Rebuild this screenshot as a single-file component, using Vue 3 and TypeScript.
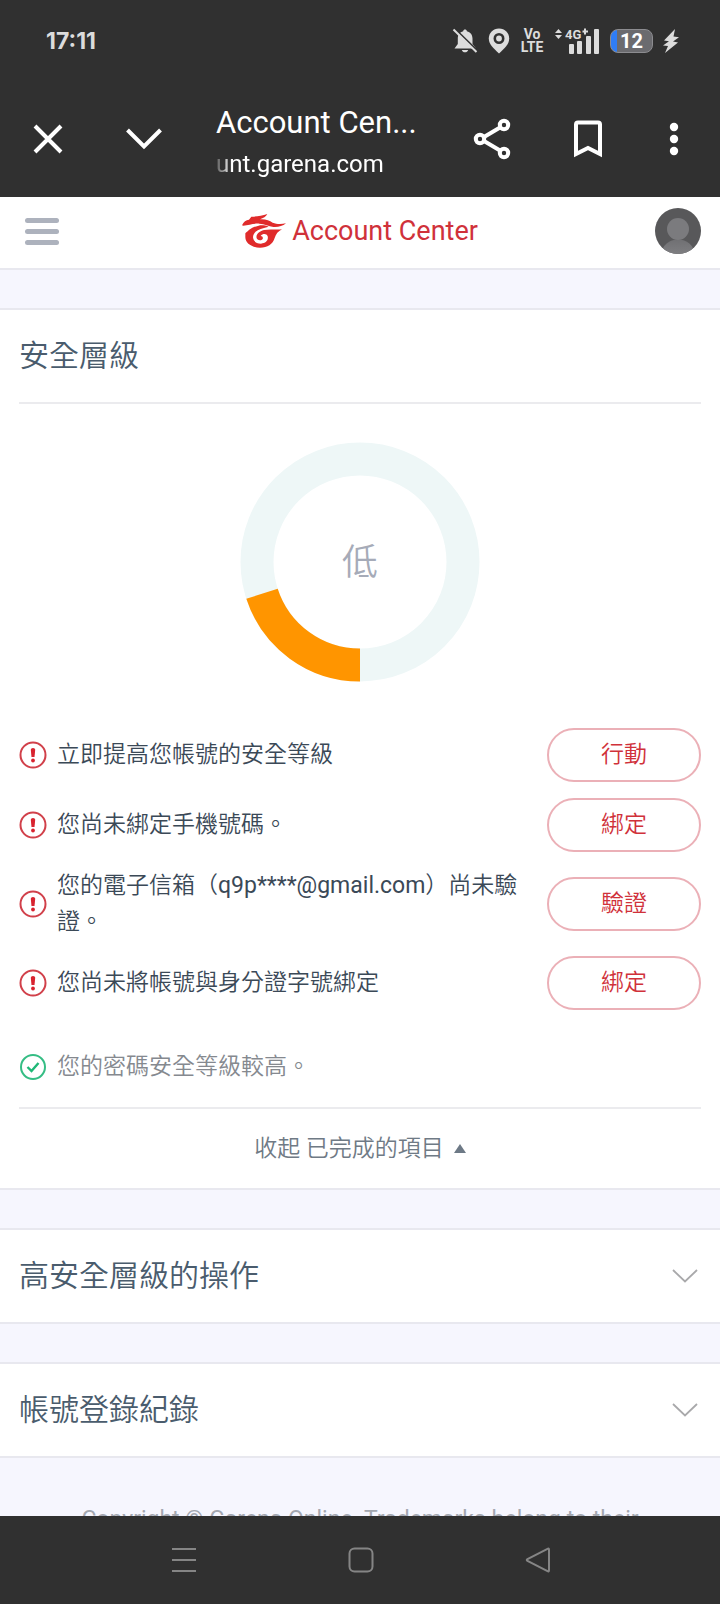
<script setup lang="ts">
import { ref } from 'vue'

interface Task {
  text: string
  email?: string
  rest?: string
  action: string
}

const tasks: Task[] = [
  { text: '立即提高您帳號的安全等級', action: '行動' },
  { text: '您尚未綁定手機號碼。', action: '綁定' },
  { text: '您的電子信箱（', email: 'q9p****@gmail.com', rest: '）尚未驗證。', action: '驗證' },
  { text: '您尚未將帳號與身分證字號綁定', action: '綁定' },
]

const panels: string[] = ['高安全層級的操作', '帳號登錄紀錄']
const level = 20
const expanded = ref(true)
</script>

<template>
  <div class="screen" lang="zh-TW">
    <div class="status">
      <span class="clock">17:11</span>
      <div class="indicators">
        <svg width="26" height="26" viewBox="0 0 26 26" fill="#dcdcdc" aria-hidden="true">
          <path d="M13 1.500c1 0 1.800.7 1.900 1.700 3.500.8 5.600 3.700 5.600 7.300v5.500l3.500 4.500H2.500L5.800 16v-5.500c0-3.600 2-6.500 5.400-7.300.1-1 .8-1.700 1.800-1.700zM9.800 22h6.400c-.5 1.500-1.700 2.300-3.200 2.300S10.300 23.500 9.800 22z" />
          <path d="M2.500 .5 25.500 23" stroke="#303030" stroke-width="2" />
          <path d="M1.500 1.500 24.500 24" stroke="#dcdcdc" stroke-width="2" />
        </svg>
        <svg width="22" height="26" viewBox="0 0 22 26" aria-hidden="true">
          <path d="M11 .5C5 .5.8 5 .8 10.500.8 16 5 20 11 25.500 17 20 21.200 16 21.200 10.500 21.200 5 17 .5 11 .5z" fill="#dcdcdc" />
          <circle cx="11" cy="10.500" r="4.200" fill="#dcdcdc" stroke="#303030" stroke-width="2.600" />
        </svg>
        <span class="volte"><span>Vo</span><span>LTE</span></span>
        <svg class="signal" width="46" height="28" viewBox="0 0 46 28" fill="#dcdcdc" aria-label="4G+">
          <path d="M1 6 4.500 2 8 6zM1 8h7l-3.500 4z" />
          <text x="11" y="12" font-size="13" font-weight="700">4G</text>
          <path d="M28.500 3.500h1.500v-2h2v2h2v2h-2v2h-2v-2h-1.500z" />
          <rect x="15" y="17" width="5" height="10" rx="1" />
          <rect x="23" y="14" width="5" height="13" rx="1" />
          <rect x="32" y="9" width="5" height="18" rx="1" />
          <rect x="40" y="2" width="5" height="25" rx="1" />
        </svg>
        <span class="battery">12</span>
        <svg width="16" height="26" viewBox="0 0 16 26" fill="#dcdcdc" aria-hidden="true">
          <path d="M12 1 1 12.500 6 13.200 0 17.500 5 18 2 25 15 14.500 10 13.500 16 9.200 10.500 8.500z" />
        </svg>
      </div>
    </div>

    <div class="toolbar">
      <button class="tool" aria-label="關閉">
        <svg width="48" height="48" viewBox="0 0 48 48"><path d="m11 11 26 26M37 11 11 37" /></svg>
      </button>
      <button class="tool" aria-label="收合">
        <svg width="48" height="48" viewBox="0 0 48 48"><path d="m7.500 15 16.500 16.500L40.500 15" /></svg>
      </button>
      <div class="address">
        <div class="page-title">Account Cen...</div>
        <div class="host">unt.garena.com</div>
      </div>
      <button class="tool" aria-label="分享">
        <svg width="48" height="48" viewBox="0 0 48 48">
          <path d="m16 22 16-9.500M16 26l16 9.500" />
          <circle cx="12" cy="24" r="4.200" /><circle cx="36" cy="10" r="4.200" /><circle cx="36" cy="38" r="4.200" />
        </svg>
      </button>
      <button class="tool" aria-label="書籤">
        <svg width="48" height="48" viewBox="0 0 48 48"><path d="M12 39V9.500q0-2 2-2h20q2 0 2 2V39l-12-6z" /></svg>
      </button>
      <button class="tool narrow" aria-label="更多">
        <svg width="28" height="48" viewBox="0 0 28 48">
          <g fill="#fff" stroke="none"><circle cx="14" cy="12" r="4.200" /><circle cx="14" cy="24" r="4.200" /><circle cx="14" cy="36" r="4.200" /></g>
        </svg>
      </button>
    </div>

    <div class="page">
      <header class="site-header">
        <button class="menu" aria-label="選單"><i></i><i></i><i></i></button>
        <a class="brand" href="#">
          <svg width="44" height="34" viewBox="0 0 132 102" fill="#e02b2b" aria-hidden="true">
            <path d="M0 34C5 23 12 18 21 17L28 8C44 8 60 6 76 0 72 8 64 12 54 16 72 15 82 20 92 26 105 31 119 30 132 28 122 37 108 40 94 39 80 37 68 30 52 29 36 28 20 33 4 35z" />
            <path d="M50 35C58 33 70 34 80 38L66 42C46 46 33 56 33 70 34 82 44 89 57 89 72 88 80 78 77 67 74 58 62 58 56 66 61 66 64 70 62 75 58 81 47 80 44 73 41 62 50 52 66 48 84 44 104 48 120 46 108 52 102 60 98 72 92 91 77 101 54 101 30 101 10 88 10 70L10 58C20 50 26 40 50 35z" />
          </svg>
          <span>Account Center</span>
        </a>
        <button class="avatar" aria-label="帳號">
          <svg width="46" height="46" viewBox="0 0 46 46">
            <defs>
              <clipPath id="avatar-clip"><circle cx="23" cy="23" r="23" /></clipPath>
              <linearGradient id="avatar-body" x1="0" y1="0" x2="0" y2="1">
                <stop offset="0" stop-color="#707073" /><stop offset="1" stop-color="#8a8a8d" />
              </linearGradient>
            </defs>
            <g clip-path="url(#avatar-clip)">
              <rect width="46" height="46" fill="#58585a" />
              <ellipse cx="23" cy="45" rx="16" ry="13.500" fill="url(#avatar-body)" />
              <circle cx="23" cy="21" r="11" fill="#7b7b7e" />
            </g>
          </svg>
        </button>
      </header>

      <section class="card">
        <h2 class="card-title">安全層級</h2>
        <div class="gauge">
          <svg width="240" height="240" viewBox="0 0 240 240" aria-hidden="true">
            <circle cx="120" cy="120" r="103" fill="none" stroke="#eef7f7" stroke-width="33" />
            <circle
              cx="120" cy="120" r="103" fill="none" stroke="#ff9500" stroke-width="33"
              pathLength="100" :stroke-dasharray="`${level} ${100 - level}`" transform="rotate(90 120 120)"
            />
          </svg>
          <span class="gauge-label">低</span>
        </div>

        <ul class="tasks">
          <li v-for="task in tasks" :key="task.text" class="row">
            <svg class="mark" width="28" height="28" viewBox="0 0 28 28" aria-hidden="true">
              <circle cx="14" cy="14" r="12.500" fill="none" stroke="#d1404a" stroke-width="2" />
              <path d="M11.800 8.800q0-1.800 2.200-1.800t2.200 1.800l-.7 7.200h-3z" fill="#d8232f" />
              <circle cx="14" cy="19.500" r="1.900" fill="#d8232f" />
            </svg>
            <span class="row-text">{{ task.text }}<span v-if="task.email" class="email">{{ task.email }}</span>{{ task.rest }}</span>
            <button class="pill">{{ task.action }}</button>
          </li>
        </ul>

        <div v-if="expanded" class="row done">
          <svg class="mark" width="28" height="28" viewBox="0 0 28 28" aria-hidden="true">
            <circle cx="14" cy="14" r="12" fill="none" stroke="#35bd84" stroke-width="2" />
            <path d="m8.500 14 4 4 7-8" fill="none" stroke="#1fb877" stroke-width="2.400" />
          </svg>
          <span class="row-text">您的密碼安全等級較高。</span>
        </div>

        <button class="toggle" @click="expanded = !expanded">
          <span>收起 已完成的項目</span>
          <svg width="12" height="9" viewBox="0 0 12 9" aria-hidden="true"><path d="M6 0 12 9H0z" fill="#6d7986" /></svg>
        </button>
      </section>

      <section v-for="panel in panels" :key="panel" class="card">
        <button class="panel">
          <span>{{ panel }}</span>
          <svg width="26" height="14" viewBox="0 0 26 14" aria-hidden="true">
            <path d="m1 1 12 11.500L25 1" fill="none" stroke="#a9a9ab" stroke-width="1.800" />
          </svg>
        </button>
      </section>

      <footer class="legal">Copyright © Garena Online. Trademarks belong to their</footer>
    </div>

    <nav class="system-nav">
      <button aria-label="最近"><svg width="28" height="28" viewBox="0 0 28 28"><path d="M2 3h24M2 14h24M2 25h24" /></svg></button>
      <button aria-label="主畫面"><svg width="28" height="28" viewBox="0 0 28 28"><rect x="2.500" y="2.500" width="23" height="23" rx="5" /></svg></button>
      <button aria-label="返回"><svg width="28" height="28" viewBox="0 0 28 28"><path d="M23.500 2.800q1.500-.8 1.500 1v20.400q0 1.800-1.500 1L3.500 15q-1.500-1 0-2z" /></svg></button>
    </nav>
  </div>
</template>

<style>
body {
  margin: 0;
}
</style>

<style scoped>
* {
  box-sizing: border-box;
}

.screen {
  display: flex;
  flex-direction: column;
  height: 100vh;
  overflow: hidden;
  font-family: Roboto, "Noto Sans CJK TC", sans-serif;
  color: #3b4957;
  background: #f6f6fe;
}

button {
  padding: 0;
  border: 0;
  background: none;
  font: inherit;
  color: inherit;
  cursor: pointer;
}

svg {
  display: block;
  flex: none;
}

.status {
  display: flex;
  flex: none;
  align-items: center;
  justify-content: space-between;
  height: 82px;
  padding: 0 41px 0 46px;
  background: #303030;
  color: #dcdcdc;
}

.clock {
  font-family: Inter, sans-serif;
  font-size: 23px;
  font-weight: 700;
}

.indicators {
  display: flex;
  align-items: center;
  gap: 10px;
}

.volte {
  display: flex;
  flex-direction: column;
  width: 24px;
  align-items: center;
  font-size: 14px;
  font-weight: 700;
  line-height: 13px;
}

.signal {
  font-family: Roboto, sans-serif;
}

.battery {
  width: 43px;
  height: 24px;
  border: 1px solid #8c8c90;
  border-radius: 8px;
  background: linear-gradient(90deg, #2f7df6 6px, #6b6b6f 6px);
  color: #fff;
  font-size: 20px;
  font-weight: 700;
  line-height: 23px;
  text-align: center;
}

.toolbar {
  display: flex;
  flex: none;
  align-items: center;
  gap: 48px;
  height: 115px;
  padding: 0 32px 2px 24px;
  background: #303030;
  color: #fff;
}

.tool {
  flex: none;
  width: 48px;
}

.tool.narrow {
  width: 28px;
}

.tool svg {
  fill: none;
  stroke: #fff;
  stroke-width: 4;
}

.address {
  flex: 1;
  min-width: 0;
  padding-top: 8px;
  white-space: nowrap;
}

.page-title {
  font-size: 31px;
  line-height: 42px;
}

.host {
  font-size: 24px;
  line-height: 40px;
  mask-image: linear-gradient(90deg, rgb(0 0 0 / 20%), #000 16px);
}

.page {
  flex: 1;
  min-height: 0;
  overflow-y: auto;
  scrollbar-width: none;
}

.site-header {
  display: flex;
  align-items: center;
  justify-content: space-between;
  padding: 11px 19px 14px 25px;
  border-bottom: 2px solid #e8e8ef;
  background: #fff;
}

.menu {
  display: flex;
  flex-direction: column;
  gap: 6px;
  width: 40px;
  padding-right: 6px;
}

.menu i {
  height: 5px;
  border-radius: 3px;
  background: #adb2bd;
}

.brand {
  display: flex;
  align-items: center;
  gap: 6px;
  color: #d0313a;
  font-size: 27px;
  line-height: 36px;
  text-decoration: none;
}

.avatar {
  border-radius: 50%;
}

.card {
  margin-top: 38px;
  padding: 0 19px;
  border: solid #e8e8ef;
  border-width: 2px 0;
  background: #fff;
}

.card-title {
  margin: 0;
  border-bottom: 2px solid #ebebee;
  color: #4a5c6d;
  font-size: 30px;
  font-weight: 350;
  line-height: 92px;
}

.gauge {
  display: grid;
  place-items: center;
  margin: 38px 0 46px;
}

.gauge > * {
  grid-area: 1 / 1;
}

.gauge-label {
  padding-bottom: 6px;
  color: #a6abb8;
  font-size: 36px;
  font-weight: 350;
}

.tasks {
  display: flex;
  flex-direction: column;
  gap: 16px;
  margin: 0 0 39px;
  padding: 0;
  list-style: none;
}

.row {
  display: flex;
  align-items: center;
  font-size: 23px;
  font-weight: 350;
  line-height: 36px;
}

.mark {
  margin-right: 10px;
}

.row-text {
  flex: 1;
}

.email {
  font-weight: 400;
}

.pill {
  width: 154px;
  height: 54px;
  margin-left: 24px;
  border: 2px solid #ebb0b7;
  border-radius: 27px;
  color: #d0313a;
}

.done {
  color: #85898f;
}

.toggle {
  display: flex;
  align-items: center;
  justify-content: center;
  gap: 10px;
  width: 100%;
  margin-top: 22px;
  border-top: 2px solid #ebebee;
  color: #6f7a85;
  font-size: 23px;
  font-weight: 350;
  line-height: 79px;
}

.panel {
  display: flex;
  align-items: center;
  justify-content: space-between;
  width: 100%;
  padding-right: 3px;
  color: #4a5c6d;
  font-size: 30px;
  font-weight: 350;
  line-height: 92px;
}

.legal {
  padding: 44px 76px;
  color: #a3a7b0;
  font-size: 23px;
  line-height: 36px;
  text-align: center;
}

.system-nav {
  display: flex;
  flex: none;
  align-items: center;
  justify-content: space-between;
  height: 88px;
  padding: 0 168px 0 170px;
  background: #303030;
}

.system-nav svg {
  fill: none;
  stroke: #858585;
  stroke-width: 2;
}
</style>
